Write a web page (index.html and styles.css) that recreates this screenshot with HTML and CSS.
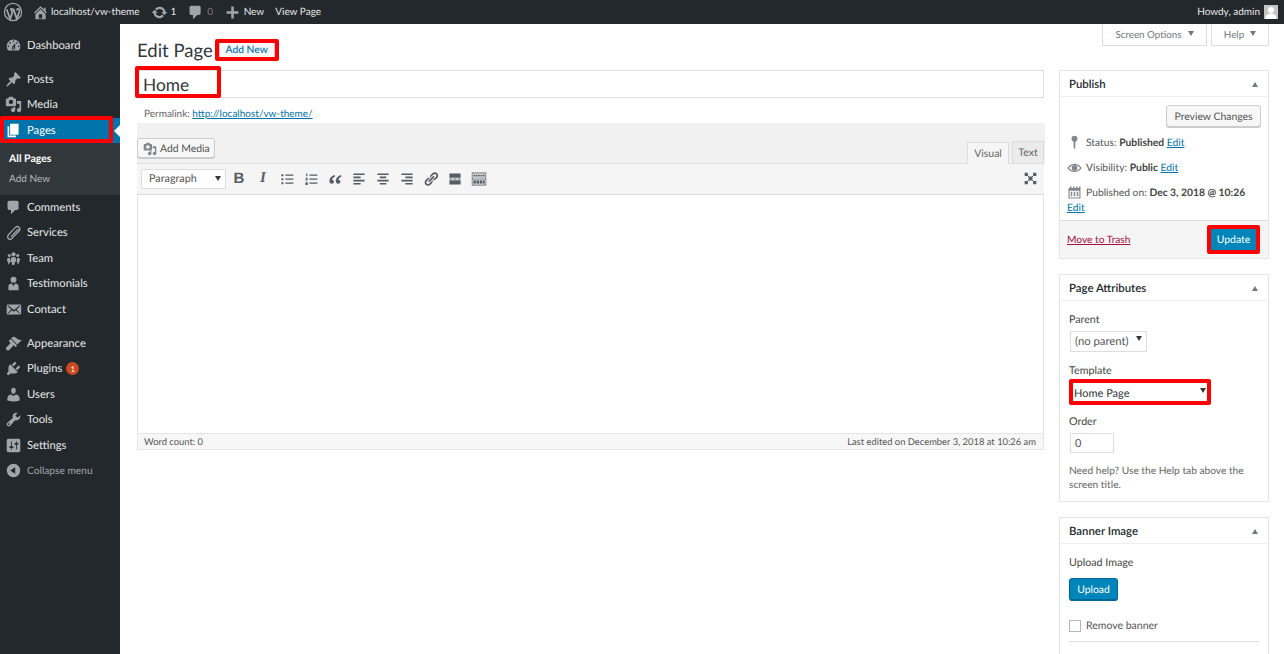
FILE: index.html
```html
<!DOCTYPE html>
<html lang="en">
<head>
<meta charset="utf-8">
<title>Edit Page</title>
<link rel="stylesheet" href="styles.css">
</head>
<body>
<header class="adminbar">
  <svg class="bar-ico logo" viewBox="0 0 20 20"><circle cx="10" cy="10" r="8.6" fill="none" stroke="#a0a5aa" stroke-width="1.3"/><path d="M3.6 7.2l3.6 9.6 2.2-6.2-1.3-3.4M7 7.1h3.6M10.4 7.1l3.4 9.6 2.6-7.4c.5-1.500-.3-2.400-1.300-2.400-.8 0-1.300.6-1.100 1.500" fill="none" stroke="#a0a5aa" stroke-width="1.800"/></svg>
  <svg class="bar-ico home" viewBox="0 0 20 20"><path d="M16 8.500l1.530 1.530-1.060 1.060L10 4.620l-6.470 6.470-1.060-1.060L10 2.500l4 4v-2h2v4zm-6-2.460l6 5.990V18H4v-5.970zM12 17v-5H8v5h4z"/></svg>
  <span class="bar-text site">localhost/vw-theme</span>
  <svg class="bar-ico upd" viewBox="0 0 20 20"><path d="M10.200 3.280c3.530 0 6.430 2.610 6.920 6h2.080l-3.500 4-3.500-4h2.320c-.45-1.970-2.210-3.440-4.320-3.440-1.450 0-2.730.71-3.540 1.780L4.950 5.660C6.230 4.200 8.110 3.280 10.200 3.280zm-.4 13.440c-3.520 0-6.430-2.610-6.920-6H.8l3.500-4c1.170 1.330 2.330 2.670 3.500 4H5.480c.45 1.970 2.210 3.440 4.320 3.440 1.450 0 2.730-.71 3.540-1.780l1.710 1.950c-1.280 1.460-3.150 2.390-5.250 2.390z"/></svg>
  <span class="bar-text num">1</span>
  <svg class="bar-ico bub" viewBox="0 0 20 20"><path d="M5 2h9c1.100 0 2 .9 2 2v7c0 1.100-.9 2-2 2h-2l-5 5v-5H5c-1.100 0-2-.9-2-2V4c0-1.100.9-2 2-2z"/></svg>
  <span class="bar-text num dim">0</span>
  <svg class="bar-ico plus" viewBox="0 0 20 20"><path d="M17 8.500v3h-5.500V17h-3v-5.500H3v-3h5.500V3h3v5.500z"/></svg>
  <span class="bar-text new">New</span>
  <span class="bar-text view">View Page</span>
  <span class="bar-text howdy">Howdy, admin</span>
  <span class="avatar"><svg viewBox="0 0 14 14"><rect width="14" height="14" fill="#c4c4c4"/><circle cx="7" cy="5" r="3" fill="#fff"/><path d="M1.500 14c0-4 2.500-5.500 5.500-5.500s5.500 1.500 5.500 5.500z" fill="#fff"/></svg></span>
</header>

<div class="shell">
  <nav class="menu">
    <a class="item first"><svg viewBox="0 0 20 20"><path d="M3.760 16h12.480c1.100-1.370 1.760-3.110 1.760-5 0-4.420-3.580-8-8-8s-8 3.580-8 8c0 1.890.66 3.630 1.760 5zM10 4c.55 0 1 .45 1 1s-.45 1-1 1-1-.45-1-1 .45-1 1-1zM6 6c.55 0 1 .45 1 1s-.45 1-1 1-1-.45-1-1 .45-1 1-1zm8 0c.55 0 1 .45 1 1s-.45 1-1 1-1-.45-1-1 .45-1 1-1zm-5.370 5.550L12 7v6c0 1.100-.9 2-2 2s-2-.9-2-2c0-.57.24-1.080.63-1.450zM4 10c.55 0 1 .45 1 1s-.45 1-1 1-1-.45-1-1 .45-1 1-1zm12 0c.55 0 1 .45 1 1s-.45 1-1 1-1-.45-1-1 .45-1 1-1zm-5 3c0-.55-.45-1-1-1s-1 .45-1 1 .45 1 1 1 1-.45 1-1z"/></svg>Dashboard</a>
    <a class="item sep"><svg viewBox="0 0 20 20"><path d="M10.440 3.020l1.820-1.820 6.360 6.350-1.830 1.820c-1.050-.68-2.480-.57-3.410.36l-.75.75c-.92.93-1.040 2.350-.35 3.410l-1.830 1.820-2.410-2.410-2.800 2.790c-.42.42-3.380 2.710-3.800 2.290s1.860-3.390 2.280-3.810l2.790-2.790L4.100 9.360l1.830-1.820c1.050.69 2.480.57 3.400-.36l.75-.75c.93-.92 1.050-2.350.36-3.410z"/></svg>Posts</a>
    <a class="item"><svg viewBox="0 0 20 20"><path d="M13 11V4c0-.55-.45-1-1-1h-1.670L9 1H5L3.670 3H2c-.55 0-1 .45-1 1v7c0 .55.45 1 1 1h10c.55 0 1-.45 1-1zM7 4.500c1.380 0 2.500 1.120 2.500 2.500S8.380 9.500 7 9.500 4.500 8.380 4.500 7 5.620 4.500 7 4.500zM14 6h5v10.500c0 1.380-1.120 2.500-2.500 2.500S14 17.880 14 16.500s1.120-2.500 2.500-2.500c.17 0 .34.02.5.05V9h-3V6zm-4 8.050V13h2v3.500c0 1.380-1.120 2.500-2.500 2.500S7 17.880 7 16.500 8.120 14 9.500 14c.17 0 .34.02.5.05z"/></svg>Media</a>
    <a class="item active"><svg viewBox="0 0 20 20"><path d="M6 15V2h10v13H6zm-1 1h8v2H3V5h2v11z"/></svg>Pages</a>
    <div class="submenu">
      <a class="sub on">All Pages</a>
      <a class="sub">Add New</a>
    </div>
    <a class="item"><svg viewBox="0 0 20 20"><path d="M5 2h9c1.100 0 2 .9 2 2v7c0 1.100-.9 2-2 2h-2l-5 5v-5H5c-1.100 0-2-.9-2-2V4c0-1.100.9-2 2-2z"/></svg>Comments</a>
    <a class="item"><svg viewBox="0 0 20 20"><path d="M7.500 14.500l7-7.500c1-1.100 2.700.3 1.600 1.600L8 17c-2 2.100-6 .2-4.500-3.300.3-.7.700-1.200 1.100-1.700L12 4.200c3-3 7.200.8 4.500 4.200l-2 2.200" fill="none" stroke="#a0a5aa" stroke-width="1.500" stroke-linecap="round"/></svg>Services</a>
    <a class="item"><svg viewBox="0 0 20 20"><circle cx="10" cy="5" r="2.500"/><circle cx="5" cy="6.500" r="1.800"/><circle cx="15" cy="6.500" r="1.800"/><path d="M7.500 8.500h5l.7 5-1.500.7-.7 3.300H8.500l-.7-3.300-1.500-.7zM3 9.500h2.800l.5 5-.9.300-.3 2H4l-.4-3-1.300-.6zM14.200 9.500H17l.7 3.700-1.300.6-.4 3h-1.100l-.3-2-.9-.3z"/></svg>Team</a>
    <a class="item"><svg viewBox="0 0 20 20"><circle cx="10" cy="5.500" r="3.500"/><path d="M4 18v-4.500C4 11 6 10 8 10l2 3 2-3c2 0 4 1 4 3.500V18z"/></svg>Testimonials</a>
    <a class="item"><svg viewBox="0 0 20 20"><path d="M19 14.500v-9c0-.83-.67-1.500-1.500-1.500H3.490c-.83 0-1.500.67-1.500 1.500v9c0 .83.67 1.500 1.500 1.500H17.500c.83 0 1.500-.67 1.500-1.500zm-1.310-9.110c.33.33.15.67-.03.84L13.600 9.950l3.900 4.060c.12.14.2.36.06.51-.13.16-.43.15-.56.05l-4.370-3.730-2.140 1.950-2.130-1.950-4.370 3.730c-.13.1-.43.11-.56-.05-.14-.15-.06-.37.06-.51l3.900-4.060-4.060-3.720c-.18-.17-.36-.51-.03-.84s.67-.17.95.07l6.240 5.040 6.250-5.040c.28-.24.62-.4.95-.07z"/></svg>Contact</a>
    <a class="item sep"><svg viewBox="0 0 20 20"><path d="M14.480 11.060L7.410 3.990l1.500-1.500c.5-.56 2.300-.47 3.510.32 1.210.8 1.430 1.280 2.910 2.100 1.180.64 2.450 1.260 4.450.85zM13.770 11.770L6.700 4.700 4.930 6.470c-.39.39-.39 1.020 0 1.410l1.060 1.060c.39.39.39 1.030 0 1.420-.6.6-5.300 4.300-4.800 5.700.3 1.200 1.500 2.300 2.700 2.400 1.500-.5 5.100-5.100 5.700-5.700.39-.39 1.030-.39 1.420 0l1.060 1.060c.39.39 1.020.39 1.410 0z"/></svg>Appearance</a>
    <a class="item"><svg viewBox="0 0 20 20"><path d="M13.110 4.360L9.870 7.600 8 5.730l3.240-3.240c.35-.34 1.050-.2 1.560.32.52.51.66 1.210.31 1.550zm-8 1.770l.91-1.120 9.010 9.010-1.190.84c-.71.71-2.630 1.160-3.820 1.160H6.140L4.900 17.260c-.59.59-1.540.59-2.120 0-.59-.58-.59-1.530 0-2.120l1.240-1.240v-3.880c0-1.130.4-3.190 1.090-3.890zm7.260 3.970l3.240-3.240c.34-.35 1.040-.21 1.550.31.52.51.66 1.210.31 1.550l-3.240 3.250z"/></svg>Plugins<span class="badge">1</span></a>
    <a class="item"><svg viewBox="0 0 20 20"><path d="M10 9.250c-2.270 0-2.730-3.440-2.730-3.440C7 4.020 7.820 2 9.970 2c2.160 0 2.980 2.020 2.710 3.810 0 0-.41 3.440-2.680 3.440zm0 2.570L12.720 10c2.390 0 4.520 2.330 4.520 4.530v2.490s-3.650 1.130-7.240 1.130c-3.650 0-7.240-1.130-7.240-1.130v-2.490c0-2.250 1.940-4.480 4.470-4.480z"/></svg>Users</a>
    <a class="item"><svg viewBox="0 0 20 20"><path d="M16.680 9.770c-1.340 1.340-3.300 1.670-4.950.99l-5.410 6.520c-.99.99-2.590.99-3.580 0s-.99-2.590 0-3.570l6.520-5.420c-.68-1.650-.35-3.610.99-4.950 1.280-1.280 3.120-1.620 4.720-1.060l-2.890 2.890 2.820 2.820 2.860-2.870c.53 1.580.18 3.390-1.080 4.650zM3.810 16.210c.4.39 1.040.39 1.430 0 .4-.4.4-1.040 0-1.430-.39-.4-1.030-.4-1.430 0-.39.39-.39 1.030 0 1.430z"/></svg>Tools</a>
    <a class="item"><svg viewBox="0 0 20 20"><path d="M18 16V4c0-1.100-.9-2-2-2H4c-1.100 0-2 .9-2 2v12c0 1.100.9 2 2 2h12c1.100 0 2-.9 2-2zM8 11h1c.55 0 1 .45 1 1s-.45 1-1 1H8v1.500c0 .28-.22.5-.5.5s-.5-.22-.5-.5V13H6c-.55 0-1-.45-1-1s.45-1 1-1h1V5.500c0-.28.22-.5.5-.5s.5.22.5.5V11zm5-2h-1c-.55 0-1-.45-1-1s.45-1 1-1h1V5.500c0-.28.22-.5.5-.5s.5.22.5.5V7h1c.55 0 1 .45 1 1s-.45 1-1 1h-1v5.500c0 .28-.22.5-.5.5s-.5-.22-.5-.5V9z"/></svg>Settings</a>
    <a class="item collapse"><svg viewBox="0 0 20 20"><path d="M10 2.160c4.330 0 7.840 3.510 7.840 7.840s-3.510 7.840-7.840 7.840S2.160 14.330 2.160 10 5.710 2.160 10 2.160zm2 11.720V6.120L6.180 9.970z"/></svg>Collapse menu</a>
  </nav>

  <main class="main">
    <div class="screen-links">
      <span class="screen-tab so">Screen Options<i class="caret"></i></span>
      <span class="screen-tab help">Help<i class="caret"></i></span>
    </div>
    <div class="headline">
      <h1>Edit Page</h1>
      <a class="add-new">Add New</a>
    </div>
    <div class="columns">
      <section class="editor-col">
        <div class="title-box">Home</div>
        <p class="permalink">Permalink: <a class="link">http://localhost/vw-theme/</a></p>
        <div class="tabs-bar">
          <span class="btn media-btn"><svg viewBox="0 0 20 20"><path d="M13 11V4c0-.55-.45-1-1-1h-1.670L9 1H5L3.670 3H2c-.55 0-1 .45-1 1v7c0 .55.45 1 1 1h10c.55 0 1-.45 1-1zM7 4.500c1.380 0 2.500 1.120 2.500 2.500S8.380 9.500 7 9.500 4.500 8.380 4.500 7 5.620 4.500 7 4.500zM14 6h5v10.500c0 1.380-1.120 2.500-2.500 2.500S14 17.880 14 16.500s1.120-2.500 2.500-2.500c.17 0 .34.02.5.05V9h-3V6zm-4 8.050V13h2v3.500c0 1.380-1.120 2.500-2.500 2.500S7 17.880 7 16.500 8.120 14 9.500 14c.17 0 .34.02.5.05z"/></svg>Add Media</span>
          <span class="tab on">Visual</span>
          <span class="tab">Text</span>
        </div>
        <div class="toolbar">
          <span class="format">Paragraph<i class="caret dark"></i></span>
          <span class="tool glyph bold">B</span>
          <span class="tool glyph ital">I</span>
          <svg class="tool" viewBox="0 0 20 20"><path d="M3 4h2.500v2.500H3zM8 4.500h10v1.500H8zM3 9h2.500v2.500H3zM8 9.500h10V11H8zM3 14h2.500v2.500H3zM8 14.500h10V16H8z"/></svg>
          <svg class="tool" viewBox="0 0 20 20"><path d="M4 3h1.500v3.500H4zM3 8.500h3v1L4.500 11H6v1H3v-1l1.500-1.500H3zM3 14h3v3.500H3zM8 4.500h10V6H8zM8 9.500h10V11H8zM8 14.500h10V16H8z"/></svg>
          <svg class="tool" viewBox="0 0 20 20"><path d="M9.500 5C6 6 3 9 3 12.500 3 14.800 4.200 16 6 16c1.500 0 2.700-1 2.700-2.500S7.500 11 6.300 11c.3-1.700 1.700-3 3.700-4zM17.500 5c-3.500 1-6.500 4-6.500 7.500 0 2.300 1.200 3.500 3 3.500 1.500 0 2.700-1 2.700-2.500S15.500 11 14.300 11c.3-1.700 1.700-3 3.700-4z"/></svg>
          <svg class="tool" viewBox="0 0 20 20"><path d="M3 3h14v2H3zM3 7h9v2H3zM3 11h14v2H3zM3 15h9v2H3z"/></svg>
          <svg class="tool" viewBox="0 0 20 20"><path d="M3 3h14v2H3zM6 7h8v2H6zM3 11h14v2H3zM6 15h8v2H6z"/></svg>
          <svg class="tool" viewBox="0 0 20 20"><path d="M3 3h14v2H3zM8 7h9v2H8zM3 11h14v2H3zM8 15h9v2H8z"/></svg>
          <svg class="tool" viewBox="0 0 20 20"><path d="M17.740 2.760c1.680 1.690 1.680 4.410 0 6.100l-1.530 1.520c-1.120 1.120-2.700 1.470-4.140 1.090l2.620-2.610.76-.77.76-.76c.84-.84.84-2.200 0-3.040-.84-.85-2.200-.85-3.040 0l-.77.76-3.380 3.380c-.37-1.440-.02-3.020 1.100-4.140l1.520-1.530c1.690-1.680 4.420-1.680 6.100 0zM8.590 13.430l5.340-5.340c.42-.42.42-1.100 0-1.520-.44-.43-1.130-.39-1.530 0l-5.330 5.340c-.42.42-.42 1.100 0 1.520.44.43 1.130.39 1.520 0zm-.76 2.290l4.140-4.150c.38 1.440.03 3.020-1.090 4.140l-1.520 1.530c-1.690 1.680-4.410 1.680-6.100 0-1.680-1.680-1.680-4.420 0-6.100l1.530-1.520c1.120-1.120 2.700-1.470 4.140-1.100l-4.140 4.150c-.85.84-.85 2.200 0 3.050.84.84 2.200.84 3.040 0z"/></svg>
          <svg class="tool" viewBox="0 0 20 20"><path d="M3 3h14v5.500H3zM3 9.500h3.500v1.200H3zM8 9.500h4v1.200H8zM13.500 9.500H17v1.200h-3.500zM3 11.700h14V17H3z"/></svg>
          <svg class="tool sink" viewBox="0 0 20 20"><path d="M1 2h18v16H1zM2 3v6.500h16V3zM2 10.500V17h16v-6.500z" fill="#555d66"/><path d="M2 3h16v6.500H2zM2 10.500h16V17H2z" fill="#c3c6c9"/><path d="M3 5h2v1.500H3zM6 5h2v1.500H6zM9 5h2v1.500H9zM12 5h2v1.500h-2zM15 5h2v1.500h-2zM3 12h3v3.500H3zM7 12h3v3.500H7zM11 12h3v3.500h-3zM15 12h2v3.500h-2z" fill="#555d66"/></svg>
          <svg class="tool full" viewBox="0 0 20 20"><path d="M4 4L16 16M16 4L4 16" stroke="#555d66" stroke-width="1.500"/><path d="M1 1h5v5H1zM14 1h5v5h-5zM1 14h5v5H1zM14 14h5v5h-5zM7 7h6v6H7z"/></svg>
        </div>
        <div class="canvas"></div>
        <div class="status"><span>Word count: 0</span><span>Last edited on December 3, 2018 at 10:26 am</span></div>
      </section>

      <aside class="side-col">
        <section class="box publish">
          <h2 class="box-head">Publish<i class="up"></i></h2>
          <div class="preview-row"><span class="btn">Preview Changes</span></div>
          <div class="pub-row"><svg viewBox="0 0 20 20"><circle cx="10" cy="5" r="4"/><path d="M8.800 8h2.400v8L10 19.500 8.800 16z"/></svg><span>Status: <b>Published</b> <a class="link">Edit</a></span></div>
          <div class="pub-row"><svg viewBox="0 0 20 20"><path d="M10 5C5.500 5 2 8 .5 10.500 2 13 5.500 16 10 16s8-3 9.500-5.500C18 8 14.500 5 10 5zm0 1.500c3.300 0 6 2 7.500 4-1.500 2-4.200 4-7.500 4s-6-2-7.500-4c1.500-2 4.200-4 7.500-4z"/><circle cx="10" cy="10.500" r="3.800"/></svg><span>Visibility: <b>Public</b> <a class="link">Edit</a></span></div>
          <div class="pub-row date"><svg viewBox="0 0 20 20"><path d="M2 4h2V2h2v2h2V2h2v2h2V2h2v2h2V2h2v2h0v14H2zM3.500 7.500V16.500h13V7.500z"/><path d="M5 9h2v6H5zM9 9h2v6H9zM13 9h2v6h-2z"/></svg><span>Published on: <b>Dec 3, 2018 @ 10:26</b></span></div>
          <a class="link date-edit">Edit</a>
          <div class="pub-foot"><a class="trash">Move to Trash</a><span class="btn primary">Update</span></div>
        </section>

        <section class="box attrs">
          <h2 class="box-head">Page Attributes<i class="up"></i></h2>
          <div class="box-body">
            <p class="lab">Parent</p>
            <div class="sel parent">(no parent)<i class="caret dark"></i></div>
            <p class="lab">Template</p>
            <div class="sel tmpl">Home Page<i class="caret dark"></i></div>
            <p class="lab">Order</p>
            <div class="sel order">0</div>
            <p class="hint">Need help? Use the Help tab above the screen title.</p>
          </div>
        </section>

        <section class="box banner">
          <h2 class="box-head">Banner Image<i class="up"></i></h2>
          <div class="box-body">
            <p class="lab">Upload Image</p>
            <span class="btn primary upload">Upload</span>
            <label class="check"><i class="tick"></i>Remove banner</label>
            <hr class="rule">
          </div>
        </section>
      </aside>
    </div>
  </main>
</div>

<div class="mark m-add"></div>
<div class="mark m-home"></div>
<div class="mark m-pages"></div>
<div class="mark m-update"></div>
<div class="mark m-tmpl"></div>
</body>
</html>
```
FILE: styles.css
```css
* { box-sizing: border-box; }
html, body { margin: 0; height: 654px; overflow: hidden; }
body { font-family: "Lato", "Open Sans", sans-serif; font-size: 12px; color: #444; background: #fff; position: relative; text-rendering: geometricPrecision; }
h1, h2, p { margin: 0; font-weight: normal; }
i { font-style: normal; }

.adminbar { height: 24px; background: #23282d; display: flex; align-items: center; color: #e6e7e8; font-size: 10px; }
.bar-ico { width: 17px; height: 17px; fill: #a0a5aa; flex: none; }
.logo { width: 20px; height: 20px; margin-left: 3px; }
.home { margin-left: 9px; }
.bar-text { white-space: nowrap; }
.site { margin-left: 2px; }
.upd { margin-left: 11px; }
.num { margin-left: 3px; }
.dim { color: #73787c; margin-left: 3px; }
.bub { margin-left: 11px; }
.plus { margin-left: 11px; }
.new { margin-left: 2.500px; }
.view { margin-left: 11px; }
.howdy { margin-left: auto; }
.avatar { width: 14px; height: 14px; margin: 0 6px 0 4px; display: block; }
.avatar svg { display: block; width: 14px; height: 14px; }

.shell { display: flex; height: 630px; }
.menu { width: 120px; flex: none; background: #23282d; padding-top: 8.800px; display: flex; flex-direction: column; }
.item { height: 25.500px; display: flex; align-items: center; color: #e6e7e8; font-size: 11.250px; white-space: nowrap; flex: none; }
.item svg { width: 17px; height: 17px; fill: #a0a5aa; margin: 0 5px 0 5px; flex: none; }
.sep { margin-top: 8.400px; }
.active { background: #0073aa; color: #fff; position: relative; }
.active svg { fill: #fff; }
.active::after { content: ""; position: absolute; right: 0; top: 7px; border: 6px solid transparent; border-right-color: #fff; border-left: 0; }
.submenu { background: #32373c; height: 51.500px; padding-top: 6px; display: flex; flex-direction: column; flex: none; }
.sub { height: 20px; padding-left: 9px; display: flex; align-items: center; font-size: 10px; color: #b4b9be; }
.sub.on { color: #fff; font-weight: 700; font-size: 10.500px; }
.badge { width: 13px; height: 13px; border-radius: 50%; background: #ca4a1f; color: #fff; font-size: 8px; margin-left: 4px; display: flex; align-items: center; justify-content: center; }
.collapse { color: #a0a5aa; font-size: 10.200px; }

.main { flex: 1; padding-left: 17px; min-width: 0; }
.screen-links { float: right; display: flex; gap: 4px; margin-right: 15px; }
.screen-tab { height: 22px; border: 1px solid #ddd; border-top: 0; display: flex; align-items: center; justify-content: center; color: #72777c; font-size: 9.800px; }
.so { width: 105px; }
.help { width: 58px; }
.caret { width: 0; height: 0; border: 3.500px solid transparent; border-top: 5px solid #72777c; border-bottom: 0; margin-left: 6px; margin-top: -2px; }
.caret.dark { border-top-color: #32373c; }
.headline { display: flex; align-items: center; padding-top: 5px; height: 46px; }
h1 { font-size: 18.500px; color: #32373c; line-height: 26px; }
.add-new { margin-left: 6px; width: 56px; height: 16px; border: 1px solid #ccc; background: #f7f7f7; color: #0073aa; font-size: 10.300px; font-weight: 500; display: flex; align-items: center; justify-content: center; }

.columns { display: flex; gap: 14px; align-items: flex-start; }
.editor-col { width: 908px; flex: none; }
.title-box { width: 907px; height: 28px; border: 1px solid #ddd; padding: 1px 0 0 5px; font-size: 17.300px; line-height: 26px; color: #32373c; }
.permalink { height: 25px; padding: 9px 0 0 7px; font-size: 10px; line-height: 15px; color: #666; }
.link { color: #0073aa; text-decoration: underline; }
.tabs-bar { height: 40px; background: #f1f1f1; display: flex; align-items: flex-end; padding-right: 1px; }
.btn { display: inline-flex; align-items: center; justify-content: center; border: 1px solid #ccc; border-radius: 3px; background: #f7f7f7; box-shadow: 0 1px 0 #ccc; color: #555; font-size: 10.400px; white-space: nowrap; padding-top: 1px; }
.media-btn { width: 78px; height: 20px; margin: 0 auto 5px 0; justify-content: flex-start; padding-left: 5px; }
.media-btn svg { width: 14px; height: 14px; fill: #82878c; margin-right: 3px; }
.tab { height: 22px; display: flex; align-items: center; justify-content: center; font-size: 10.500px; color: #666; border: 1px solid #ddd; border-bottom: 0; background: #ebebeb; width: 32px; padding-top: 1px; }
.tab.on { width: 42px; background: #f5f5f5; margin-right: 3px; position: relative; top: 1px; padding-top: 0; }
.toolbar { width: 907px; height: 32px; background: #f5f5f5; border: 1px solid #ddd; border-width: 1px 0 1px 0; display: flex; align-items: center; padding: 0 0 1px 4px; }
.format { width: 85px; height: 20px; border: 1px solid #ddd; background: #fff; color: #555; font-size: 10.800px; padding: 0 4px 0 7px; display: flex; align-items: center; justify-content: space-between; margin-right: 1px; }
.format .caret { margin: 0; }
.tool { width: 16px; height: 16px; fill: #555d66; margin-left: 4px; margin-right: 4px; flex: none; }
.glyph { font-size: 15px; color: #555d66; display: flex; align-items: center; justify-content: center; }
.bold { font-family: "Liberation Sans", sans-serif; font-weight: 700; }
.ital { font-family: "Liberation Serif", serif; font-weight: 700; font-style: italic; }
.sink { width: 16px; height: 16px; }
.full { margin-left: auto; width: 13px; height: 13px; margin-right: 7px; }
.canvas { width: 907px; height: 238px; border: 1px solid #e5e5e5; border-width: 0 1px; background: #fff; }
.status { width: 907px; height: 17px; background: #f7f7f7; border: 1px solid #e5e5e5; display: flex; align-items: center; justify-content: space-between; padding: 2px 7px 0 6px; font-size: 9.400px; color: #555; }

.side-col { width: 210px; flex: none; display: flex; flex-direction: column; gap: 15px; }
.box { border: 1px solid #e5e5e5; background: #fff; }
.box-head { height: 26px; padding: 1px 10px 0 9px; border-bottom: 1px solid #eee; font-size: 11.400px; font-weight: 600; color: #23282d; display: flex; align-items: center; justify-content: space-between; }
.up { width: 0; height: 0; border: 3.500px solid transparent; border-bottom: 5px solid #72777c; border-top: 0; }
.preview-row { display: flex; justify-content: flex-end; padding: 8px 7px 0 0; height: 32.500px; }
.preview-row .btn { width: 95px; height: 22px; }
.pub-row { height: 25px; display: flex; align-items: center; font-size: 10.300px; color: #555; padding-top: 1px; }
.pub-row svg { width: 15px; height: 15px; fill: #82878c; margin: 0 4px 0 7px; flex: none; }
.pub-row b { color: #444; font-weight: 700; }
.date-edit { display: block; font-size: 10.300px; padding-left: 7px; height: 15px; line-height: 15px; margin-top: -4px; }
.pub-foot { margin-top: 4.500px; height: 38px; border-top: 1px solid #ddd; background: #f5f5f5; display: flex; align-items: center; justify-content: space-between; padding: 0 10px 0 7px; }
.trash { color: #a8103c; text-decoration: underline; font-size: 10.200px; }
.primary { background: #0085ba; border-color: #006799; color: #fff; box-shadow: 0 1px 0 #006799; }
.pub-foot .primary { width: 49px; height: 23px; }

.box-body { padding: 10.500px 9px 0; }
.attrs { height: 228px; }
.lab { font-size: 10.700px; line-height: 15px; color: #444; }
.sel { border: 1px solid #ddd; font-size: 11px; color: #32373c; display: flex; align-items: center; justify-content: space-between; }
.sel .caret { margin: -6px 0 0 0; }
.parent { width: 77px; height: 21px; margin: 4.500px 0 10.500px 1px; padding: 0 4px; color: #555; font-size: 11.300px; }
.tmpl { width: 132px; height: 18px; margin: 6.500px 0 11.500px 5px; border: 0; padding-right: 0; }
.order { width: 44px; height: 20px; margin: 4.500px 0 11px 1px; padding-left: 4px; color: #555; }
.hint { font-size: 10.200px; line-height: 14px; color: #666; }
.banner { flex: none; height: 170px; }
.upload { display: flex; width: 49px; height: 22px; margin-top: 8.500px; }
.check { display: flex; align-items: center; margin-top: 20px; font-size: 10.500px; color: #555; }
.tick { width: 12px; height: 12px; border: 1px solid #b4b9be; margin-right: 5px; background: #fff; }
.rule { border: 0; border-top: 1px solid #ddd; margin: 9px 0 0; }

.mark { position: absolute; border: 4px solid #f00; border-radius: 2px; }
.m-add { left: 215px; top: 39px; width: 64px; height: 22px; }
.m-home { left: 135px; top: 66px; width: 86px; height: 32px; }
.m-pages { left: 0; top: 116px; width: 113px; height: 27px; }
.m-update { left: 1207px; top: 225px; width: 53px; height: 29px; }
.m-tmpl { left: 1069px; top: 379px; width: 142px; height: 26px; }
```
